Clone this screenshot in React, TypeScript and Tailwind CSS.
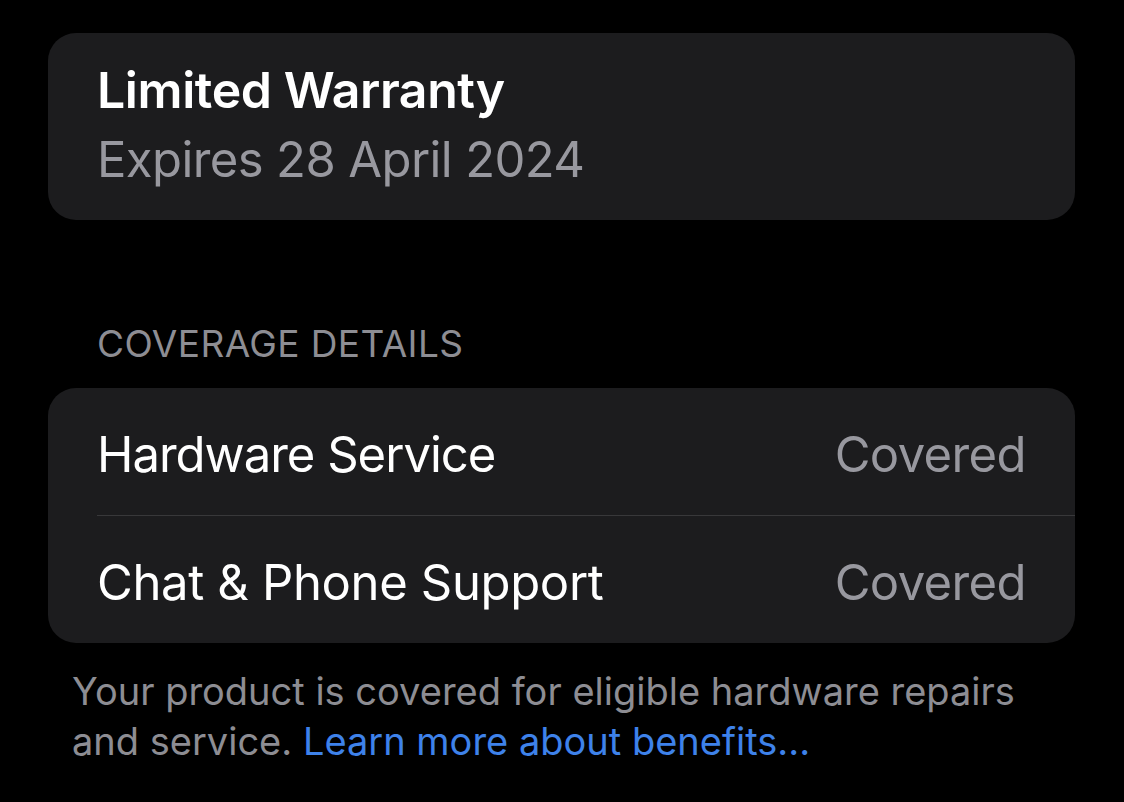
export default function App() {
  return (
    <main
      className="min-h-screen bg-black text-white"
      style={{ fontFamily: "Inter, 'Noto Sans', 'Liberation Sans', sans-serif" }}
    >
      <div className="pt-[33px] pl-[48px] pr-[49px]">
        {/* warranty summary */}
        <section className="rounded-[28px] bg-[#1c1c1e] pl-[49px] pr-[49px] pt-[23px] pb-[26px]">
          <h1 className="text-[50px] font-semibold leading-[69px] tracking-[-0.4px]">Limited Warranty</h1>
          <p className="text-[49px] leading-[69px] tracking-[-0.6px] text-[#98989f]">Expires 28 April 2024</p>
        </section>

        <h2 className="mt-[102px] pl-[49px] text-[37px] leading-[44px] tracking-[0.4px] text-[#8d8d93]">
          COVERAGE DETAILS
        </h2>

        <section className="mt-[22px] overflow-hidden rounded-[28px] bg-[#1c1c1e] pl-[49px]">
          <div className="flex h-[128px] items-center justify-between border-b border-[#38383a] pr-[49px] pt-[6px]">
            <span className="text-[49px] tracking-[-1px]">Hardware Service</span>
            <span className="text-[49px] tracking-[-0.6px] text-[#98989f]">Covered</span>
          </div>
          <div className="flex h-[127px] items-center justify-between pr-[49px] pt-[6px]">
            <span className="text-[49px] tracking-[-0.35px]">Chat &amp; Phone Support</span>
            <span className="text-[49px] tracking-[-0.6px] text-[#98989f]">Covered</span>
          </div>
        </section>
      </div>

      <p className="mt-[23px] pl-[72px] pr-[60px] text-[38px] leading-[50px] text-[#8d8d93]">
        Your product is covered for eligible hardware repairs and service.{" "}
        <a href="#" className="text-[#3e82ea]">
          Learn more about benefits...
        </a>
      </p>
    </main>
  )
}
